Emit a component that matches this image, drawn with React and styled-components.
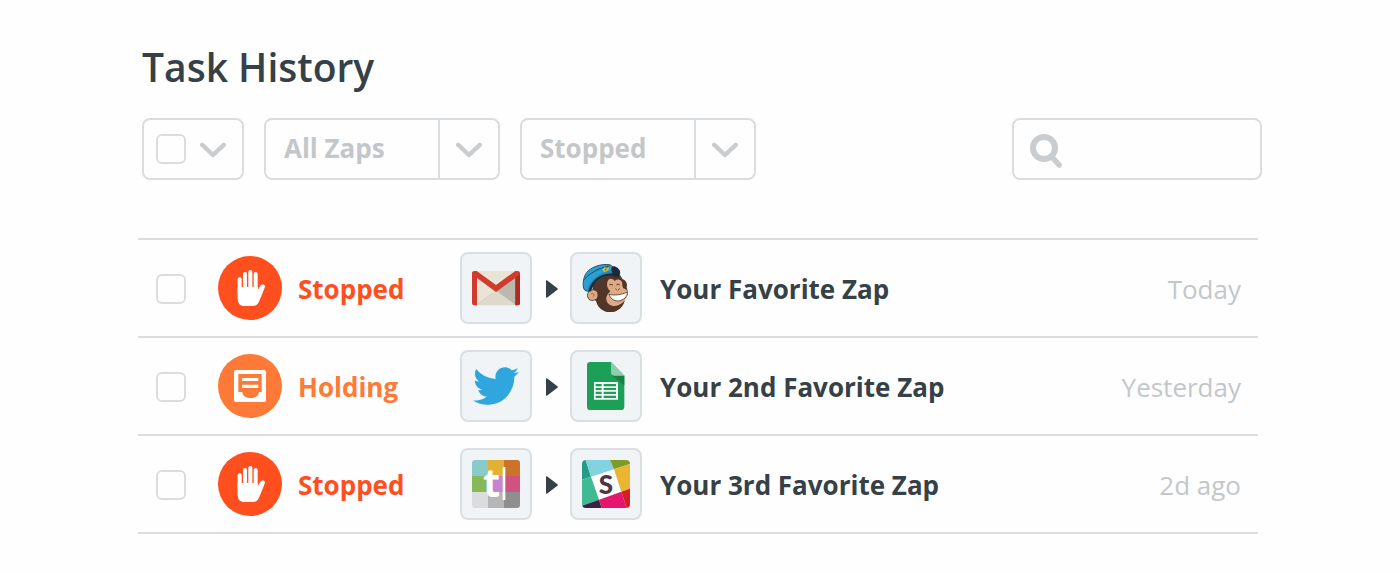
import React, { useState } from 'react'
import styled, { createGlobalStyle } from 'styled-components'
import { FaTwitter } from 'react-icons/fa'

const TASKS = [
  { id: 1, status: 'stopped', from: 'gmail', to: 'mailchimp', name: 'Your Favorite Zap', date: 'Today' },
  { id: 2, status: 'holding', from: 'twitter', to: 'sheets', name: 'Your 2nd Favorite Zap', date: 'Yesterday' },
  { id: 3, status: 'stopped', from: 'typetalk', to: 'slack', name: 'Your 3rd Favorite Zap', date: '2d ago' },
]

const STATUS = {
  stopped: { label: 'Stopped', color: '#ff4f1f', Icon: HandIcon },
  holding: { label: 'Holding', color: '#ff7a36', Icon: TrayIcon },
}

const APPS = {
  gmail: GmailLogo,
  mailchimp: MailchimpLogo,
  twitter: TwitterLogo,
  sheets: SheetsLogo,
  typetalk: TextLogo,
  slack: SlackLogo,
}

function ChevronIcon() {
  return (
    <svg width="26" height="18" viewBox="0 0 26 18" fill="none" aria-hidden="true">
      <path d="M2.2 4.8L13 15L23.8 4.8" stroke="#c9cdd0" strokeWidth="4.4" strokeLinecap="round" strokeLinejoin="round" />
    </svg>
  )
}

function SearchIcon() {
  return (
    <svg width="32" height="38" viewBox="0 -4 32 38" fill="none" stroke="#c9cdd0" aria-hidden="true">
      <circle cx="14" cy="14" r="11" strokeWidth="6" />
      <path d="M22 23L29.2 31" strokeWidth="5.6" strokeLinecap="round" />
    </svg>
  )
}

function HandIcon() {
  return (
    <svg width="64" height="64" viewBox="0 0 192 192" fill="#fff" aria-hidden="true">
      <rect x="59" y="64" width="12" height="50" rx="5.5" />
      <rect x="75" y="48" width="12" height="60" rx="6" />
      <rect x="91" y="42" width="12" height="66" rx="6" />
      <rect x="107" y="48" width="12" height="60" rx="6" />
      <path d="M59 93H119V103L127 89C131 83 142 84 141 92C137 104 131 117 126 130C121 144 116 150 104 150H80C66 150 59 142 59 128Z" />
    </svg>
  )
}

function TrayIcon() {
  return (
    <svg width="64" height="64" viewBox="0 0 192 192" aria-hidden="true">
      <rect x="48" y="48" width="96" height="96" rx="6" fill="#fff" />
      <path d="M61 60H131V114H123C122 126 112 132 98 132C84 132 74 126 73 114H61Z" fill="#ff7a36" />
      <path d="M72 72H121V81H72ZM72 92H121V102H72Z" fill="#fff" />
    </svg>
  )
}

function ArrowIcon() {
  return (
    <svg width="14" height="20" viewBox="-2 -2 14 20" aria-hidden="true">
      <path d="M0 1.2Q0 -0.4 1.3 0.6L11.4 8.2Q12.3 9 11.4 9.8L1.3 17.4Q0 18.4 0 16.8Z" fill="#354147" />
    </svg>
  )
}

function GmailLogo() {
  return (
    <svg width="48" height="48" viewBox="0 0 144 144" role="img" aria-label="Gmail">
      <rect x="0" y="21" width="144" height="103" rx="7" fill="#e9e4d5" />
      <path d="M14 122L72 80L130 122V124H14Z" fill="#dedacb" />
      <path d="M72 80L130 38V122Z" fill="#bcb8ae" />
      <path d="M14 122L62 87" stroke="#c3bdac" strokeWidth="1.5" />
      <path d="M0 28Q0 21 8 21H14L72 63L130 21H136Q144 21 144 28V117Q144 124 137 124H130V42L72 84L15 42V124H7Q0 124 0 117Z" fill="#d23a2e" />
      <path d="M130 42L144 31V117Q144 124 137 124H130Z" fill="#ad2b23" />
    </svg>
  )
}

function MailchimpLogo() {
  return (
    <svg width="48" height="48" viewBox="51 57 144 144" role="img" aria-label="MailChimp">
      <path d="M84 120C90 92 118 76 145 80C158 82 168 91 172 102C184 106 188 116 185 128C191 140 190 151 180 161C178 183 160 201 136 202C115 202 98 188 93 168C84 164 80 140 84 120Z" fill="#523529" />
      <path d="M128 108C133 98 143 100 149 108C157 101 168 103 171 112C173 120 171 124 175 130C188 134 191 142 187 151C184 163 176 174 160 181C142 187 126 178 124 164C122 153 131 145 136 138C127 132 124 119 128 108Z" fill="#dcab85" />
      <path d="M132 148C148 152 169 150 187 141C188 155 176 166 160 168C146 168 136 160 132 148Z" fill="#fff" stroke="#523529" strokeWidth="2.5" />
      <path d="M134 119Q139 115 143 120M155 119Q159 114 163 119" fill="none" stroke="#523529" strokeWidth="3" strokeLinecap="round" />
      <path d="M152 132L155 135M163 131L160 135" stroke="#523529" strokeWidth="2.5" strokeLinecap="round" />
      <path d="M98 143C91 130 73 133 68 146C65 160 75 170 88 165C96 164 101 155 98 143Z" fill="#dcab85" stroke="#523529" strokeWidth="2.5" />
      <path d="M78 146Q86 143 88 151L83 155" fill="none" stroke="#a06e52" strokeWidth="3" />
      <path d="M55 126C53 106 58 88 70 77C85 64 110 56 134 59C140 61 145 66 147 72L96 107C85 115 77 126 70 139C61 139 56 134 55 126Z" fill="#2b9fd2" stroke="#21394b" strokeWidth="2.5" />
      <path d="M58 104C74 84 100 69 134 63" fill="none" stroke="#1d4d6b" strokeWidth="3" />
      <path d="M66 137C70 115 90 90 124 81L146 72L150 86C122 85 88 108 77 137Z" fill="#2386b8" />
      <path d="M70 140C75 120 88 100 112 90C124 86 134 87 143 84C138 76 138 67 143 64C152 62 162 70 165 79C167 89 162 96 153 97C138 87 118 91 103 103C90 113 82 125 78 139Z" fill="#1c2a38" />
      <path d="M111 74L119 66L126 70L133 66L130 76L118 82Z" fill="#c9bd42" />
      <path d="M118 73L125 70L123 78Z" fill="#498c3d" />
    </svg>
  )
}

function TwitterLogo() {
  return <FaTwitter size={46} color="#2fa7de" role="img" aria-label="Twitter" />
}

function SheetsLogo() {
  return (
    <svg width="48" height="48" viewBox="0 0 144 144" role="img" aria-label="Google Sheets">
      <path d="M25 0H87L127 41V134Q127 144 117 144H25Q15 144 15 134V10Q15 0 25 0Z" fill="#1c9f57" />
      <path d="M90 41H127V70Z" fill="#168048" />
      <path d="M87 0L127 41H97Q87 41 87 31Z" fill="#8ccfaa" />
      <path d="M36 60H108V113H36ZM41 66V73H59V66ZM65 66V73H102V66ZM41 78V84H59V78ZM65 78V84H102V78ZM41 89V96H59V89ZM65 89V96H102V89ZM41 101V108H59V101ZM65 101V108H102V101Z" fill="#f3f8f5" fillRule="evenodd" />
    </svg>
  )
}

function TextLogo() {
  const tiles = ['#8acbc9', '#e2b032', '#cb732b', '#88b958', '#c485cf', '#cf527f', '#dadcde', '#b7b6b6', '#908f90']
  return (
    <TileSvg width="48" height="48" viewBox="0 0 144 144" role="img" aria-label="Typetalk">
      <clipPath id="text-tile"><rect width="144" height="144" rx="9" /></clipPath>
      <g clipPath="url(#text-tile)">
        {tiles.map((fill, i) => (
          <rect key={fill} x={(i % 3) * 48} y={Math.floor(i / 3) * 48} width="48" height="48" fill={fill} />
        ))}
      </g>
      <text x="33" y="112" fontFamily="Open Sans, sans-serif" fontSize="118" fontWeight="700" fill="#fff">t</text>
      <rect x="92" y="21" width="8" height="99" fill="#fff" />
    </TileSvg>
  )
}

function SlackLogo() {
  return (
    <TileSvg width="48" height="48" viewBox="0 0 144 144" role="img" aria-label="Slack">
      <clipPath id="slack-tile"><rect width="144" height="144" rx="12" /></clipPath>
      <g clipPath="url(#slack-tile)">
        <rect width="144" height="144" fill="#fff" />
        <path d="M0 0H11L27 50L0 59Z" fill="#229d85" />
        <path d="M11 0H84L96 28L27 50Z" fill="#83d2e0" />
        <path d="M84 0H144V12L96 28Z" fill="#7d9c25" />
        <path d="M0 59L27 50L51 119L0 137Z" fill="#3fba93" />
        <path d="M96 28L144 12V86L118 95Z" fill="#e9b533" />
        <path d="M0 137L51 119L59 144H0Z" fill="#3c2143" />
        <path d="M51 119L118 95L134 144H59Z" fill="#e4176c" />
        <path d="M118 95L144 86V144H134Z" fill="#d31d27" />
      </g>
      <text x="72" y="101" textAnchor="middle" fontFamily="Lato, sans-serif" fontSize="78" fontWeight="900" fill="#4b3547">S</text>
    </TileSvg>
  )
}

function FilterSelect({ label, options }) {
  return (
    <SelectBox>
      <Select aria-label={label} defaultValue={options[0]}>
        {options.map((option) => <option key={option}>{option}</option>)}
      </Select>
      <SelectArrow><ChevronIcon /></SelectArrow>
    </SelectBox>
  )
}

function AppIcon({ app }) {
  const Logo = APPS[app]
  return <AppTile><Logo /></AppTile>
}

function TaskRow({ task, checked, onToggle }) {
  const { label, color, Icon } = STATUS[task.status]

  return (
    <tr>
      <CheckCell>
        <Checkbox type="checkbox" aria-label={`Select ${task.name}`} checked={checked} onChange={onToggle} />
      </CheckCell>
      <StatusCell>
        <Status $color={color}>
          <StatusCircle $color={color}><Icon /></StatusCircle>
          <StatusLabel>{label}</StatusLabel>
        </Status>
      </StatusCell>
      <AppsCell>
        <Apps>
          <AppIcon app={task.from} />
          <ArrowIcon />
          <AppIcon app={task.to} />
        </Apps>
      </AppsCell>
      <NameCell>{task.name}</NameCell>
      <DateCell>{task.date}</DateCell>
    </tr>
  )
}

function App() {
  const [selected, setSelected] = useState([])

  const toggle = (id) => {
    setSelected(selected.includes(id) ? selected.filter((item) => item !== id) : [...selected, id])
  }

  const toggleAll = () => {
    setSelected(selected.length === TASKS.length ? [] : TASKS.map((task) => task.id))
  }

  return (
    <Page>
      <GlobalStyle />
      <Title>Task History</Title>
      <Toolbar>
        <SelectAll>
          <Checkbox
            type="checkbox"
            aria-label="Select all tasks"
            checked={selected.length === TASKS.length}
            onChange={toggleAll}
          />
          <MenuButton type="button" aria-label="Selection options"><ChevronIcon /></MenuButton>
        </SelectAll>
        <FilterSelect label="Zap" options={['All Zaps']} />
        <FilterSelect label="Status" options={['Stopped', 'Holding']} />
        <SearchBox>
          <SearchIcon />
          <SearchInput type="search" aria-label="Search tasks" />
        </SearchBox>
      </Toolbar>
      <Table>
        <tbody>
          {TASKS.map((task) => (
            <TaskRow
              key={task.id}
              task={task}
              checked={selected.includes(task.id)}
              onToggle={() => toggle(task.id)}
            />
          ))}
        </tbody>
      </Table>
    </Page>
  )
}

const GlobalStyle = createGlobalStyle`
    * {
        box-sizing: border-box;
    }

    body {
        margin: 0;
        background-color: #fefefe;
        color: #354147;
        font-family: "Open Sans", sans-serif;
        font-size: 26px;
    }

    svg {
        display: block;
        flex-shrink: 0;
    }
`;

const Page = styled.main`
    padding: 38px 138px 40px;
`;

const Title = styled.h1`
    margin: 0 0 22px 4px;
    font-size: 39px;
    line-height: 58px;
    font-weight: 600;
`;

const Toolbar = styled.div`
    display: flex;
    gap: 20px;
    margin: 0 0 58px 4px;
`;

const ToolbarBox = styled.div`
    height: 62px;
    border: 2px solid #dadddf;
    border-radius: 8px;
`;

const SelectAll = styled(ToolbarBox)`
    display: flex;
    align-items: center;
    gap: 14px;
    padding: 0 16px 0 12px;
`;

const Checkbox = styled.input`
    appearance: none;
    display: block;
    width: 30px;
    height: 30px;
    margin: 0;
    border: 2px solid #dadddf;
    border-radius: 6px;
    cursor: pointer;

    &:checked {
        background-color: #c9cdd0;
    }
`;

const MenuButton = styled.button`
    padding: 0;
    border: none;
    background: none;
    cursor: pointer;
`;

const SelectBox = styled(ToolbarBox)`
    display: grid;
    grid-template-columns: 1fr 60px;
    width: 236px;
`;

const Select = styled.select`
    appearance: none;
    grid-column: 1 / 3;
    grid-row: 1;
    padding: 0 78px 2px 18px;
    border: none;
    background: none;
    color: #c3c7ca;
    font: inherit;
    font-weight: 700;
    cursor: pointer;
`;

const SelectArrow = styled.span`
    grid-column: 2;
    grid-row: 1;
    display: flex;
    align-items: center;
    justify-content: center;
    border-left: 2px solid #dadddf;
    pointer-events: none;
`;

const SearchBox = styled(ToolbarBox)`
    display: flex;
    align-items: center;
    gap: 10px;
    width: 250px;
    margin-left: auto;
    padding: 0 16px;
`;

const SearchInput = styled.input`
    flex: 1;
    min-width: 0;
    padding: 0;
    border: none;
    outline: none;
    background: none;
    color: inherit;
    font: inherit;
`;

const Table = styled.table`
    width: calc(100% - 4px);
    border-spacing: 0;
    border-top: 2px solid #dadddf;
`;

const Cell = styled.td`
    height: 98px;
    padding: 0;
    border-bottom: 2px solid #dadddf;
    vertical-align: middle;
    white-space: nowrap;
`;

const CheckCell = styled(Cell)`
    width: 80px;
    padding: 2px 0 0 18px;
`;

const StatusCell = styled(Cell)`
    width: 242px;
`;

const Status = styled.div`
    display: flex;
    align-items: center;
    gap: 16px;
    color: ${({ $color }) => $color};
    font-weight: 700;
`;

const StatusCircle = styled.span`
    border-radius: 50%;
    background-color: ${({ $color }) => $color};
`;

const StatusLabel = styled.span`
    padding-top: 2px;
`;

const AppsCell = styled(Cell)`
    width: 200px;
`;

const Apps = styled.div`
    display: flex;
    align-items: center;
    gap: 12px;
`;

const AppTile = styled.span`
    display: flex;
    align-items: center;
    justify-content: center;
    width: 72px;
    height: 72px;
    border: 2px solid #dadfe2;
    border-radius: 8px;
    background-color: #f0f4f6;
`;

const TileSvg = styled.svg`
    overflow: visible;
`;

const NameCell = styled(Cell)`
    padding-top: 2px;
    font-weight: 700;
`;

const DateCell = styled(Cell)`
    padding: 2px 17px 0 0;
    color: #c3c7ca;
    text-align: right;
`;

export default App
